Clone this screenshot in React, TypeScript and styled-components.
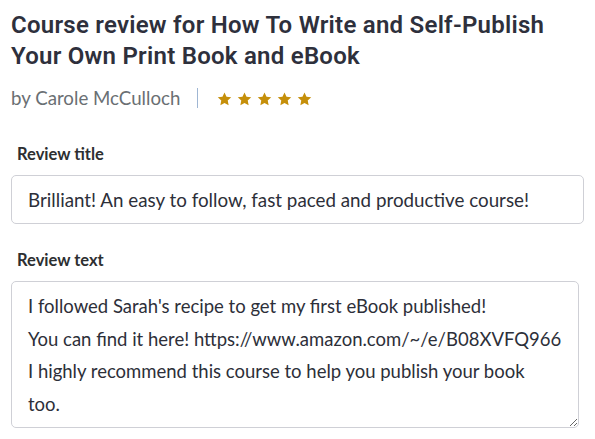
import React from "react";
import styled, { createGlobalStyle } from "styled-components";

const Global = createGlobalStyle`
  html, body { margin: 0; padding: 0; background: #ffffff; }
  body { font-family: "Lato", "Open Sans", sans-serif; color: #2d2f31; }
`;

const Page = styled.div`
  padding: 10px 11px 0 11px;
  display: flex;
  flex-direction: column;
`;

const Title = styled.h1`
  margin: 0;
  font-family: "Roboto", "Inter", sans-serif;
  font-weight: 600;
  font-size: 24px;
  line-height: 31px;
  letter-spacing: 0.25px;
  color: #2e303c;
`;

const Byline = styled.div`
  display: flex;
  align-items: center;
  margin-top: 15px;
  height: 22px;
  font-size: 18.7px;
  color: #6a6f73;
`;

const Sep = styled.span`
  width: 1px;
  height: 20px;
  background: #9fb6d3;
  margin: 0 19px 0 17px;
`;

const Stars = styled.div`
  display: flex;
  gap: 5px;
  padding-top: 1px;
`;

const Field = styled.div<{ $top: number }>`
  display: flex;
  flex-direction: column;
  margin-top: ${(p) => p.$top}px;
`;

const Label = styled.label`
  font-weight: 700;
  font-size: 16.5px;
  line-height: 20px;
  color: #2d2f31;
  padding-left: 6px;
  margin-bottom: 11px;
`;

const TextInput = styled.input`
  box-sizing: border-box;
  width: 573px;
  height: 49px;
  border: 1px solid #cfd0d6;
  border-radius: 5px;
  padding: 0 16px;
  font-family: "Lato", "Open Sans", sans-serif;
  font-size: 18.8px;
  color: #2d2f39;
  outline: none;
  background: #fff;
`;

const TextArea = styled.textarea`
  box-sizing: border-box;
  width: 568px;
  height: 147px;
  border: 1px solid #cfd0d6;
  border-radius: 5px;
  padding: 8px 6px 8px 16px;
  font-family: "Lato", "Open Sans", sans-serif;
  font-size: 18.5px;
  line-height: 32.5px;
  color: #2d2f39;
  outline: none;
  background: #fff;
  resize: both;
  overflow: hidden;
`;

const Star = () => (
  <svg width="15" height="14" viewBox="0 0 24 23">
    <path
      d="M12 0.8l3.3 7.1 7.7 0.9-5.7 5.3 1.5 7.6L12 17.9l-6.8 3.8 1.5-7.6L1 8.8l7.7-0.9z"
      fill="#c58f0a"
    />
  </svg>
);

export default function App() {
  return (
    <>
      <Global />
      <Page>
        <Title>
          Course review for How To Write and Self-Publish
          <br />
          Your Own Print Book and eBook
        </Title>
        <Byline>
          by Carole McCulloch
          <Sep />
          <Stars>
            {[0, 1, 2, 3, 4].map((i) => (
              <Star key={i} />
            ))}
          </Stars>
        </Byline>
        <Field $top={35}>
          <Label>Review title</Label>
          <TextInput
            readOnly
            value="Brilliant! An easy to follow, fast paced and productive course!"
          />
        </Field>
        <Field $top={26}>
          <Label>Review text</Label>
          <TextArea
            readOnly
            value={
              "I followed Sarah's recipe to get my first eBook published!\nYou can find it here! https://www.amazon.com/~/e/B08XVFQ966\nI highly recommend this course to help you publish your book\ntoo."
            }
          />
        </Field>
      </Page>
    </>
  );
}
